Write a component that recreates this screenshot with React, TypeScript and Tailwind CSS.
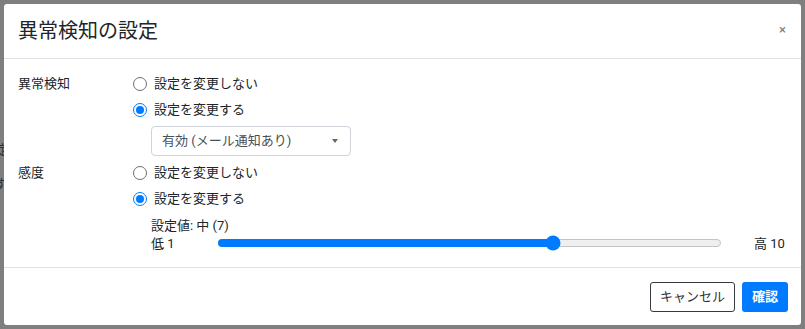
import React from "react";

const FONT = { fontFamily: '"Segoe UI", Roboto, "Noto Sans CJK JP", sans-serif' };

function Radio({ checked, label }: { checked?: boolean; label: string }) {
  return (
    <div className="flex items-center h-[26px]">
      {checked ? (
        <span className="w-[14px] h-[14px] rounded-full border-[1.5px] border-[#007bff] flex items-center justify-center">
          <span className="w-[8px] h-[8px] rounded-full bg-[#007bff]" />
        </span>
      ) : (
        <span className="w-[14px] h-[14px] rounded-full border border-[#6f6f6f]" />
      )}
      <span className="ml-[7px] text-[13px] text-[#212529]">{label}</span>
    </div>
  );
}

export default function App() {
  const pct = ((7 - 1) / 9) * 100;
  return (
    <div className="w-[805px] h-[329px] bg-[#7f7f7f] p-[4px] relative overflow-hidden" style={FONT}>
      <div className="absolute left-[-4px] top-[140px] text-[13px] text-[#333]">定</div>
      <div className="absolute left-[-6px] top-[174px] text-[13px] text-[#333]">す</div>
      <div className="relative w-[797px] h-[321px] bg-white rounded-[3px] flex flex-col">
        <div className="h-[55px] flex items-center justify-between pl-[14px] pr-[14px] border-b border-[#dee2e6]">
          <div className="text-[20px] text-[#212529] leading-none mt-[-1px]">異常検知の設定</div>
          <div className="text-[13px] text-[#777] leading-none mt-[-4px] mr-[1px]">×</div>
        </div>
        <div className="flex-1 pt-[12px] pl-[14px] pr-[10px] border-b border-[#dee2e6]">
          <div className="flex">
            <div className="w-[115px] h-[26px] flex items-center text-[13px] text-[#212529]">異常検知</div>
            <div className="flex flex-col">
              <Radio label="設定を変更しない" />
              <Radio checked label="設定を変更する" />
              <div className="ml-[18px] mt-[3px] mb-[4px] w-[200px] h-[30px] border border-[#ced4da] rounded-[4px] flex items-center justify-between pl-[10px] pr-[12px]">
                <span className="text-[13px] text-[#495057]">有効 (メール通知あり)</span>
                <span className="w-0 h-0 border-l-[3px] border-r-[3px] border-t-[4px] border-l-transparent border-r-transparent border-t-[#666]" />
              </div>
            </div>
          </div>
          <div className="flex">
            <div className="w-[115px] h-[26px] flex items-center text-[13px] text-[#212529]">感度</div>
            <div className="flex flex-col flex-1">
              <Radio label="設定を変更しない" />
              <Radio checked label="設定を変更する" />
              <div className="ml-[18px] mt-[5px] text-[13px] text-[#212529] leading-[18px]">設定値: 中 (7)</div>
              <div className="ml-[18px] flex items-center h-[18px] text-[13px] text-[#212529] whitespace-nowrap">
                <span className="w-[67px] shrink-0">低 1</span>
                <div className="relative shrink-0 w-[503px] h-[8px] mt-[-3px] rounded-full bg-[#efefef] border border-[#c4c4c4]">
                  <div className="absolute left-[-1px] top-[-1px] h-[8px] rounded-full bg-[#007bff]" style={{ width: `${pct}%` }} />
                  <div
                    className="absolute top-1/2 w-[15px] h-[15px] rounded-full bg-[#007bff] -translate-x-1/2 -translate-y-1/2"
                    style={{ left: `${pct}%` }}
                  />
                </div>
                <span className="ml-[33px] shrink-0">高 10</span>
              </div>
            </div>
          </div>
        </div>
        <div className="h-[57px] flex items-center justify-end gap-[7px] pr-[13px]">
          <button className="h-[30px] w-[85px] border border-[#343a40] rounded-[3px] text-[13px] text-[#333] bg-white">キャンセル</button>
          <button className="h-[30px] w-[46px] rounded-[3px] text-[13px] text-white font-bold bg-[#007bff]">確認</button>
        </div>
      </div>
    </div>
  );
}
